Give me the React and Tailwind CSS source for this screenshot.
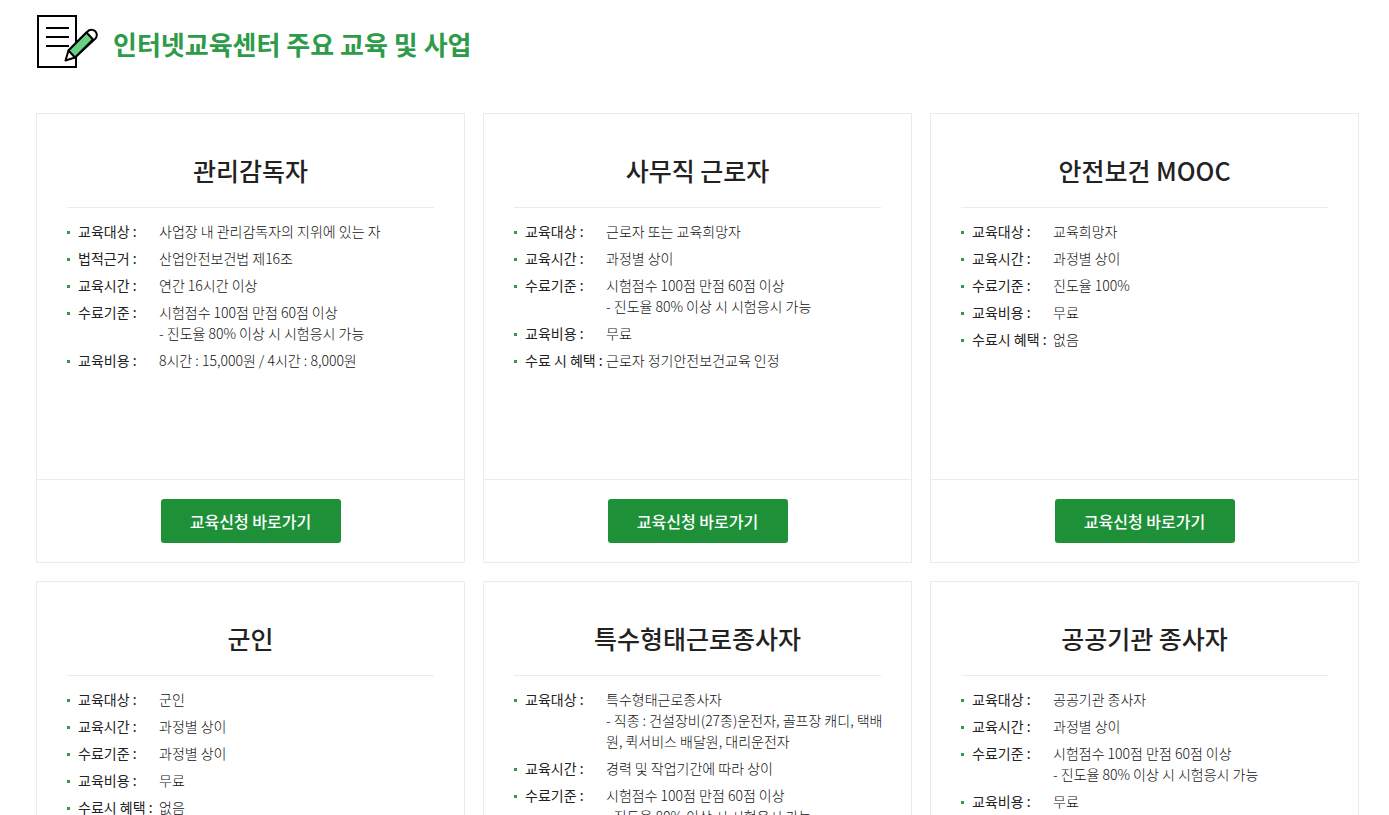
const EXAM = ['시험점수 100점 만점 60점 이상', '- 진도율 80% 이상 시 시험응시 가능'];

const COURSES = [
  {
    title: '관리감독자',
    rows: [
      ['교육대상 :', ['사업장 내 관리감독자의 지위에 있는 자']],
      ['법적근거 :', ['산업안전보건법 제16조']],
      ['교육시간 :', ['연간 16시간 이상']],
      ['수료기준 :', EXAM],
      ['교육비용 :', ['8시간 : 15,000원 / 4시간 : 8,000원']],
    ],
  },
  {
    title: '사무직 근로자',
    rows: [
      ['교육대상 :', ['근로자 또는 교육희망자']],
      ['교육시간 :', ['과정별 상이']],
      ['수료기준 :', EXAM],
      ['교육비용 :', ['무료']],
      ['수료 시 혜택 :', ['근로자 정기안전보건교육 인정']],
    ],
  },
  {
    title: '안전보건 MOOC',
    rows: [
      ['교육대상 :', ['교육희망자']],
      ['교육시간 :', ['과정별 상이']],
      ['수료기준 :', ['진도율 100%']],
      ['교육비용 :', ['무료']],
      ['수료시 혜택 :', ['없음']],
    ],
  },
  {
    title: '군인',
    rows: [
      ['교육대상 :', ['군인']],
      ['교육시간 :', ['과정별 상이']],
      ['수료기준 :', ['과정별 상이']],
      ['교육비용 :', ['무료']],
      ['수료시 혜택 :', ['없음']],
    ],
  },
  {
    title: '특수형태근로종사자',
    rows: [
      ['교육대상 :', ['특수형태근로종사자', '- 직종 : 건설장비(27종)운전자, 골프장 캐디, 택배원, 퀵서비스 배달원, 대리운전자']],
      ['교육시간 :', ['경력 및 작업기간에 따라 상이']],
      ['수료기준 :', EXAM],
    ],
  },
  {
    title: '공공기관 종사자',
    rows: [
      ['교육대상 :', ['공공기관 종사자']],
      ['교육시간 :', ['과정별 상이']],
      ['수료기준 :', EXAM],
      ['교육비용 :', ['무료']],
    ],
  },
];

function NoteIcon() {
  return (
    <svg className="h-[54px] w-[62px] shrink-0" viewBox="0 0 62 54" fill="none" stroke="#000" strokeWidth="2" aria-hidden="true">
      <rect x="2" y="2" width="38" height="51" fill="#fff" />
      <path d="M10 14H33M10 23H33M10 32H33" />
      <g strokeLinejoin="round">
        <path d="M29.5 46.5L32.5 36.5L51.5 17.5A4.9 4.9 0 0 1 59.5 24.5L39 43.5Z" fill="#fff" />
        <path d="M32.5 36.5L50.5 18.5L57 25.5L39 43.5Z" fill="#68d188" />
      </g>
    </svg>
  );
}

function CourseCard({ title, rows }) {
  return (
    <article className="flex min-h-[450px] flex-col border border-[#ebebeb]">
      <div className="grow px-[30px] pt-9">
        <h2 className="border-b border-[#ebebeb] pb-[17px] text-center text-[25px] leading-10 font-medium text-[#222]">{title}</h2>
        <dl className="-mr-3 flex flex-col gap-1.5 py-[13px] text-sm leading-[21px]">
          {rows.map(([label, lines]) => (
            <div key={label} className="flex">
              <span className="mt-[10px] mr-2 size-[3px] shrink-0 bg-[#35964e]" />
              <dt className="w-[81px] shrink-0 whitespace-nowrap text-[#222]">{label}</dt>
              <dd className="min-w-0 grow font-light break-all text-[#111]">
                {lines.map((line) => (
                  <p key={line}>{line}</p>
                ))}
              </dd>
            </div>
          ))}
        </dl>
      </div>
      <div className="flex justify-center border-t border-[#ebebeb] py-[19px]">
        <a href="#" className="flex h-11 w-[180px] items-center justify-center rounded-[3px] bg-[#1e9138] text-base font-medium text-white">
          교육신청 바로가기
        </a>
      </div>
    </article>
  );
}

export default function App() {
  return (
    <main className="bg-white pt-3.5 pr-[30px] pb-9 pl-9 font-['Noto_Sans_CJK_KR',sans-serif]">
      <header className="flex items-center gap-[15px]">
        <NoteIcon />
        <h1 className="pt-1.5 text-[26px] leading-[48px] font-bold text-[#2d9b48]">인터넷교육센터 주요 교육 및 사업</h1>
      </header>
      <section className="mt-[45px] grid grid-cols-3 gap-[18px]">
        {COURSES.map((course) => (
          <CourseCard key={course.title} {...course} />
        ))}
      </section>
    </main>
  );
}
